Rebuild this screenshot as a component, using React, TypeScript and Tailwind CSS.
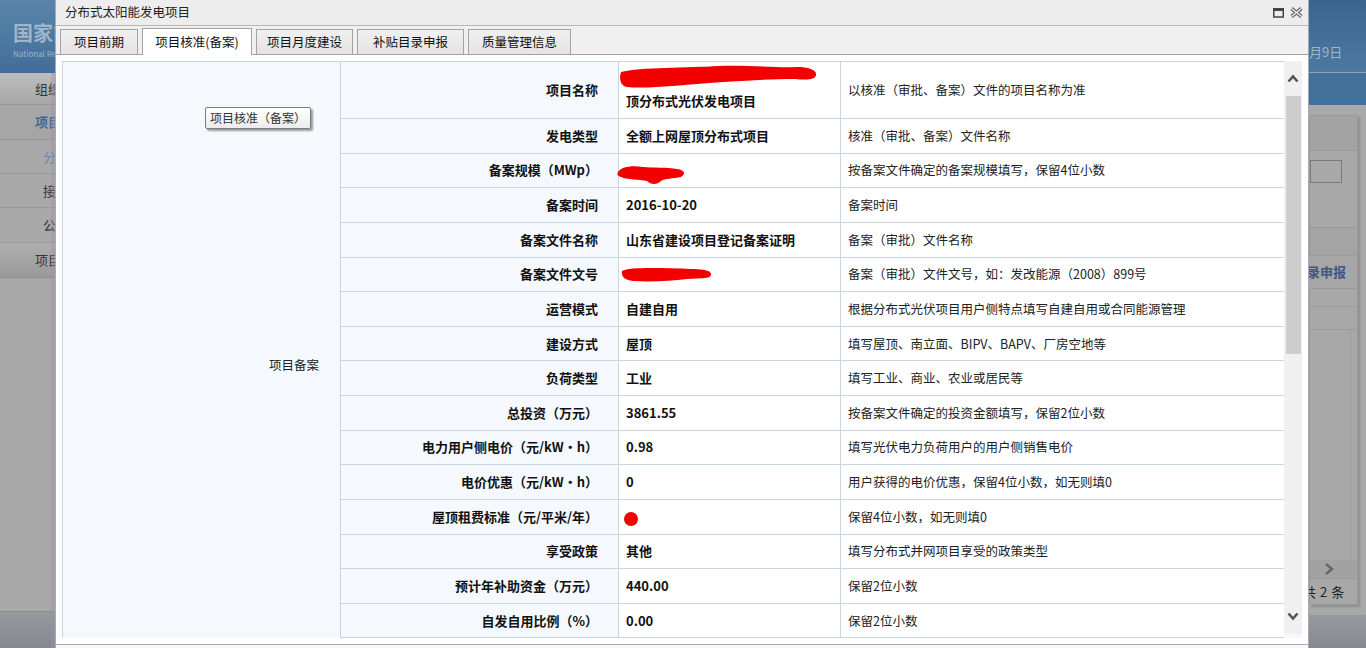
import React from 'react'

type Row = {
  label: string
  value?: string
  desc: string
  mark?: 'name' | 'scale' | 'doc' | 'dot'
}

const rows: Row[] = [
  { label: '项目名称', value: '顶分布式光伏发电项目', desc: '以核准（审批、备案）文件的项目名称为准', mark: 'name' },
  { label: '发电类型', value: '全额上网屋顶分布式项目', desc: '核准（审批、备案）文件名称' },
  { label: '备案规模（MWp）', desc: '按备案文件确定的备案规模填写，保留4位小数', mark: 'scale' },
  { label: '备案时间', value: '2016-10-20', desc: '备案时间' },
  { label: '备案文件名称', value: '山东省建设项目登记备案证明', desc: '备案（审批）文件名称' },
  { label: '备案文件文号', desc: '备案（审批）文件文号，如：发改能源（2008）899号', mark: 'doc' },
  { label: '运营模式', value: '自建自用', desc: '根据分布式光伏项目用户侧特点填写自建自用或合同能源管理' },
  { label: '建设方式', value: '屋顶', desc: '填写屋顶、南立面、BIPV、BAPV、厂房空地等' },
  { label: '负荷类型', value: '工业', desc: '填写工业、商业、农业或居民等' },
  { label: '总投资（万元）', value: '3861.55', desc: '按备案文件确定的投资金额填写，保留2位小数' },
  { label: '电力用户侧电价（元/kW•h）', value: '0.98', desc: '填写光伏电力负荷用户的用户侧销售电价' },
  { label: '电价优惠（元/kW•h）', value: '0', desc: '用户获得的电价优惠，保留4位小数，如无则填0' },
  { label: '屋顶租费标准（元/平米/年）', desc: '保留4位小数，如无则填0', mark: 'dot' },
  { label: '享受政策', value: '其他', desc: '填写分布式并网项目享受的政策类型' },
  { label: '预计年补助资金（万元）', value: '440.00', desc: '保留2位小数' },
  { label: '自发自用比例（%）', value: '0.00', desc: '保留2位小数' },
  { label: '项目业主', value: '', desc: '项目业主单位名称' },
]

function RedMark({ kind }: { kind: Row['mark'] }) {
  if (kind === 'name')
    return (
      <svg className="absolute left-0 top-[2px]" width="200" height="26" viewBox="0 0 200 26">
        <path d="M2,8 C20,3 70,4 100,2 C130,1 160,4 178,3 C190,3 198,6 197,11 C196,16 188,16 176,15 C150,15 120,17 90,19 C60,21 30,25 8,23 C1,22 0,14 2,8 Z" fill="#f20000" />
      </svg>
    )
  if (kind === 'scale')
    return (
      <svg className="absolute left-[-2px] top-[10px]" width="70" height="22" viewBox="0 0 70 22">
        <path d="M1,8 C4,3 14,1 26,3 C36,4 50,3 60,5 C68,6 69,10 64,13 C56,15 48,14 44,17 C40,21 34,21 30,17 C22,15 10,16 4,13 C0,12 0,10 1,8 Z" fill="#f20000" />
      </svg>
    )
  if (kind === 'doc')
    return (
      <svg className="absolute left-[2px] top-[8px]" width="92" height="18" viewBox="0 0 92 18">
        <path d="M1,5 C8,1 40,2 70,3 C84,3 91,5 90,9 C89,13 80,12 66,13 C50,15 30,16 12,15 C4,14 0,11 1,5 Z" fill="#f20000" />
      </svg>
    )
  if (kind === 'dot')
    return (
      <svg className="absolute left-[4px] top-[11px]" width="16" height="16" viewBox="0 0 16 16">
        <circle cx="8" cy="8" r="7" fill="#f20000" />
      </svg>
    )
  return null
}

function LeftPage() {
  return (
    <div className="relative w-[55px] shrink-0 flex flex-col overflow-hidden">
      <div className="h-[73px] bg-gradient-to-b from-[#5a84ab] to-[#416e98] pl-[13px] pt-[22px] whitespace-nowrap">
        <div className="text-[20px] font-bold leading-[22px] text-[#9db5cd]">国家能源局</div>
        <div className="mt-[5px] text-[8px] leading-[10px] text-[#9db5cd]">National Renewable Energy</div>
      </div>
      <div className="h-[32px] bg-gradient-to-b from-[#bdbdbd] to-[#a7a7a7] border-b border-[#969696] pl-[35px] flex items-center whitespace-nowrap text-[13px] text-[#333]">组织机构</div>
      <div className="h-[35px] bg-[#a6a6a6] border-b border-[#989898] pl-[35px] flex items-center whitespace-nowrap text-[13px] font-bold text-[#3f6a98]">项目管理</div>
      <div className="h-[34px] bg-[#a9a9a9] border-b border-[#999] pl-[43px] flex items-center whitespace-nowrap text-[13px] text-[#5d87b3]">分布式</div>
      <div className="h-[34px] bg-[#a9a9a9] border-b border-[#999] pl-[43px] flex items-center whitespace-nowrap text-[13px] text-[#333]">接入</div>
      <div className="h-[35px] bg-[#a9a9a9] border-b border-[#999] pl-[43px] flex items-center whitespace-nowrap text-[13px] text-[#333]">公告</div>
      <div className="h-[35px] bg-gradient-to-b from-[#b0b0b0] to-[#999] border-b border-[#8f8f8f] pl-[35px] flex items-center whitespace-nowrap text-[13px] text-[#333]">项目信息</div>
      <div className="h-[334px] bg-[#a8a8a8] border-b border-[#8e8e8e]" />
      <div className="flex-1 bg-gradient-to-b from-[#979a9f] to-[#85888e]" />
      <div className="absolute right-0 top-[73px] bottom-0 w-[4px] bg-[#9e94ad]/40" />
    </div>
  )
}

function RightPage() {
  return (
    <div className="w-[57px] shrink-0 flex flex-col overflow-hidden">
      <div className="h-[73px] bg-gradient-to-b from-[#3a648e] to-[#4c79a2] border-b border-[#8ea5ba] pt-[42px] whitespace-nowrap text-[13px] text-[#9fb5cb]">月9日</div>
      <div className="h-[32px] bg-[#42709b]" />
      <div className="flex-1 bg-[#a9a9a9] pt-[10px] flex flex-col">
        <div className="mr-[8px] h-[490px] bg-[#a8a8a8] border border-[#9a9a9a] shadow-[2px_2px_2px_#8f8f8f] flex flex-col">
          <div className="h-[35px] bg-[#a3a3a3] border-b border-[#979797]" />
          <div className="h-[77px] pt-[9px] border-b border-[#999]">
            <div className="mr-[15px] h-[23px] border border-[#7a7a7a]" />
          </div>
          <div className="h-[28px] bg-[#a4a4a4] border-b border-[#9b9b9b]" />
          <div className="h-[33px] bg-[#a6a6a6] border-b border-[#999] flex items-center whitespace-nowrap text-[13px] font-bold text-[#3e5884] -ml-[16px]">目录申报</div>
          <div className="h-[18px] border-b border-[#9d9d9d]" />
          <div className="h-[23px] border-b border-[#9d9d9d]" />
          <div className="flex-1 border-r border-[#9e9e9e] mr-[6px]" />
          <div className="h-[18px] bg-[#a2a2a2] flex items-center pl-[14px]">
            <svg width="10" height="14" viewBox="0 0 10 14"><polyline points="2,2 8,7 2,12" fill="none" stroke="#666" strokeWidth="2.5" /></svg>
          </div>
          <div className="h-[26px] border-t border-[#999] flex items-center whitespace-nowrap text-[13px] text-[#222] -ml-[7px] gap-[4px]">
            <span>共</span>
            <span>2</span>
            <span>条</span>
          </div>
        </div>
        <div className="h-[10px]" />
        <div className="flex-1 bg-gradient-to-b from-[#979a9f] to-[#85888e]" />
      </div>
    </div>
  )
}

function Tab({ label, active, w }: { label: string; active?: boolean; w: string }) {
  return (
    <div
      className={
        active
          ? `${w} h-[27px] -mb-px bg-white border border-b-0 border-[#a3a3a3] flex items-center justify-center text-[12.5px] text-[#111]`
          : `${w} h-[25px] bg-gradient-to-b from-[#f0f0f0] to-[#e4e4e4] border border-b-0 border-[#a3a3a3] flex items-center justify-center text-[12.5px] text-[#111]`
      }
    >
      {label}
    </div>
  )
}

function Scrollbar() {
  return (
    <div className="w-[18px] h-[573px] bg-[#f0f0f0] flex flex-col items-center">
      <div className="h-[35px] flex items-center justify-center">
        <svg width="12" height="9" viewBox="0 0 12 9"><polyline points="1.5,7.5 6,2.5 10.5,7.5" fill="none" stroke="#555" strokeWidth="2.6" /></svg>
      </div>
      <div className="w-[15px] h-[258px] bg-[#cdcdcd]" />
      <div className="flex-1" />
      <div className="h-[35px] flex items-center justify-center">
        <svg width="12" height="9" viewBox="0 0 12 9"><polyline points="1.5,1.5 6,6.5 10.5,1.5" fill="none" stroke="#555" strokeWidth="2.6" /></svg>
      </div>
    </div>
  )
}

function Modal() {
  return (
    <div className="w-[1254px] shrink-0 flex flex-col bg-[#f0f0f0] border-x border-[#a9abb0]">
      <div className="h-[26px] bg-[#ededed] border-b border-[#b8b8b8] flex items-center justify-between pl-[9px] pr-[5px]">
        <span className="text-[12.5px] text-[#222]">分布式太阳能发电项目</span>
        <div className="flex items-center gap-[6px]">
          <svg width="11" height="10" viewBox="0 0 11 10"><rect x="0.75" y="1.5" width="9.5" height="7.5" fill="none" stroke="#444" strokeWidth="1.5" /><rect x="0" y="0" width="11" height="3" fill="#444" /></svg>
          <svg width="13" height="11" viewBox="0 0 13 11">
            <path d="M1.5,1.5 L11.5,9.5 M11.5,1.5 L1.5,9.5" stroke="#666" strokeWidth="3.6" />
            <path d="M1.5,1.5 L11.5,9.5 M11.5,1.5 L1.5,9.5" stroke="#ededed" strokeWidth="1.4" />
          </svg>
        </div>
      </div>
      <div className="h-[29px] flex items-end gap-[4px] pl-[4px] border-b border-[#a3a3a3]">
        <Tab label="项目前期" w="w-[78px]" />
        <Tab label="项目核准(备案)" w="w-[110px]" active />
        <Tab label="项目月度建设" w="w-[97px]" />
        <Tab label="补贴目录申报" w="w-[107px]" />
        <Tab label="质量管理信息" w="w-[103px]" />
      </div>
      <div className="bg-white px-[6px] pt-[6px] pb-[6px] border-b border-[#a9abb0]">
        <div className="flex h-[577px] bg-[#f5f9fe]">
          <div className="relative w-[1222px] h-[577px] overflow-hidden">
            <table className="w-[1222px] table-fixed border-collapse">
              <colgroup>
                <col className="w-[278px]" />
                <col className="w-[278px]" />
                <col className="w-[222px]" />
                <col className="w-[444px]" />
              </colgroup>
              <tbody>
                {rows.map((r, i) => (
                  <tr key={r.label} className={i === 0 ? 'h-[57px]' : 'h-[34.64px]'}>
                    {i === 0 && (
                      <td rowSpan={rows.length} className="align-top border border-[#c8d6e2] bg-[#f5f9fe] pt-[295px] pr-[21px] text-right text-[12.5px] leading-[16px] text-[#222]">
                        项目备案
                      </td>
                    )}
                    <td className="border border-[#c8d6e2] bg-[#f5f9fe] pr-[20px] text-right text-[13px] font-bold leading-[16px] text-[#111] whitespace-nowrap">
                      {r.label}
                    </td>
                    <td className="relative border border-[#c8d6e2] bg-white pl-[7px] text-[13px] font-bold leading-[16px] text-[#111] whitespace-nowrap">
                      {r.mark && <RedMark kind={r.mark} />}
                      {r.mark === 'name' ? <div className="pt-[21px]">{r.value}</div> : r.value}
                    </td>
                    <td className="border border-[#c8d6e2] bg-white pl-[7px] text-[12.5px] leading-[16px] text-[#222] whitespace-nowrap">
                      {r.desc}
                    </td>
                  </tr>
                ))}
              </tbody>
            </table>
            <div className="absolute left-[143px] top-[46px] h-[22px] px-[4px] flex items-center bg-gradient-to-b from-white to-[#ececec] border border-[#7c7c7c] rounded-[2px] shadow-[2px_2px_2px_#9a9a9a] text-[12px] text-[#333] whitespace-nowrap">
              项目核准（备案）
            </div>
          </div>
          <Scrollbar />
        </div>
      </div>
      <div className="flex-1 bg-[#f8f8f8]" />
    </div>
  )
}

export default function App() {
  return (
    <div className="w-[1366px] h-[648px] overflow-hidden flex bg-[#a8a8a8] font-['Noto_Sans_CJK_SC','Noto_Sans',sans-serif]">
      <LeftPage />
      <Modal />
      <RightPage />
    </div>
  )
}
